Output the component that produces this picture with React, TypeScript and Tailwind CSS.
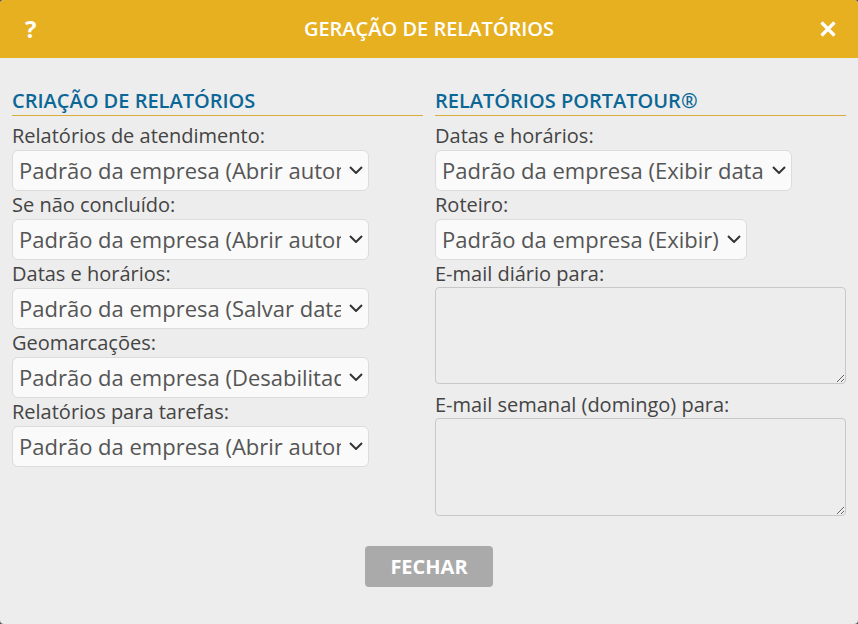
const font = { fontFamily: '"Open Sans", "Noto Sans", sans-serif' };

function Chevron() {
  return (
    <svg
      width="14"
      height="8"
      viewBox="0 0 14 8"
      className="pointer-events-none absolute right-[6px] top-[16px]"
    >
      <path d="M1 1L7 7L13 1" fill="none" stroke="#333" strokeWidth="2" />
    </svg>
  );
}

function Field({ label, value, width }: { label: string; value: string; width: string }) {
  return (
    <div>
      <div className="h-[28px] flex items-center text-[20px] text-[#444]">{label}</div>
      <div className={`relative ${width}`}>
        <select
          defaultValue={value}
          className="block w-full h-[41px] appearance-none rounded-[6px] border border-[#dcdcdc] bg-[#fafafa] pl-[6px] pr-[27px] text-[22px] text-[#555] outline-none"
          style={font}
        >
          <option>{value}</option>
        </select>
        <Chevron />
      </div>
    </div>
  );
}

function Area({ label, height }: { label: string; height: string }) {
  return (
    <div>
      <div className="h-[27px] flex items-center text-[20px] text-[#444]">{label}</div>
      <textarea
        className={`block w-full ${height} rounded-[4px] border border-[#c8c8c8] bg-[#ededed] outline-none mb-[7px]`}
      />
    </div>
  );
}

export default function App() {
  return (
    <div className="w-[858px] h-[624px] bg-[#555]" style={font}>
      <div className="flex h-full flex-col overflow-hidden rounded-[4px] bg-[#ededed]">
        {/* Header */}
        <div className="flex h-[58px] shrink-0 items-center justify-between bg-[#e6b021] px-[22px] text-white">
          <span className="w-[16px] pl-[3px] text-[24px] font-bold leading-none">?</span>
          <span className="text-[20px] font-semibold">GERAÇÃO DE RELATÓRIOS</span>
          <span className="flex w-[16px] justify-end">
            <svg width="16" height="16" viewBox="0 0 16 16">
              <path d="M1.5 1.5L14.5 14.5M14.5 1.5L1.5 14.5" stroke="white" strokeWidth="3.2" />
            </svg>
          </span>
        </div>

        {/* Body */}
        <div className="px-[12px] pt-[31px]">
          <div className="grid grid-cols-2 gap-[12px]">
            <div>
              <h2 className="border-b border-[#d9ac3c] pb-[2px] text-[20px] leading-[24px] font-semibold text-[#0b6796]">
                CRIAÇÃO DE RELATÓRIOS
              </h2>
              <div className="mt-[6px]">
                <Field label="Relatórios de atendimento:" value="Padrão da empresa (Abrir automaticamente)" width="w-[357px]" />
                <Field label="Se não concluído:" value="Padrão da empresa (Abrir automaticamente)" width="w-[357px]" />
                <Field label="Datas e horários:" value="Padrão da empresa (Salvar datas e horários)" width="w-[357px]" />
                <Field label="Geomarcações:" value="Padrão da empresa (Desabilitado)" width="w-[357px]" />
                <Field label="Relatórios para tarefas:" value="Padrão da empresa (Abrir automaticamente)" width="w-[357px]" />
              </div>
            </div>
            <div>
              <h2 className="border-b border-[#d9ac3c] pb-[2px] text-[20px] leading-[24px] font-semibold text-[#0b6796]">
                RELATÓRIOS PORTATOUR®
              </h2>
              <div className="mt-[6px]">
                <Field label="Datas e horários:" value="Padrão da empresa (Exibir datas e horários)" width="w-[357px]" />
                <Field label="Roteiro:" value="Padrão da empresa (Exibir)" width="w-[312px]" />
                <Area label="E-mail diário para:" height="h-[97px]" />
                <Area label="E-mail semanal (domingo) para:" height="h-[98px]" />
              </div>
            </div>
          </div>

          <div className="mt-[23px] flex justify-center">
            <button className="h-[41px] w-[128px] rounded-[4px] bg-[#aaaaaa] text-[20px] font-bold text-white">
              FECHAR
            </button>
          </div>
        </div>
      </div>
    </div>
  );
}
